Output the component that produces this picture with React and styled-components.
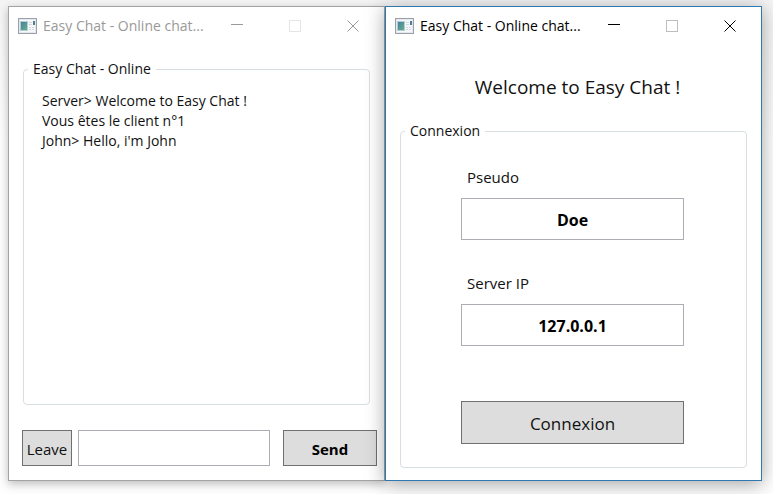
import { useState } from "react";
import styled, { createGlobalStyle } from "styled-components";

const AppIcon = () => (
    <svg width="19" height="16" viewBox="0 0 19 16" aria-hidden="true">
        <defs>
            <linearGradient id="screen" x1="0" y1="0" x2="1" y2="1">
                <stop offset="0" stopColor="#4a7fa0" />
                <stop offset="1" stopColor="#62b08c" />
            </linearGradient>
        </defs>
        <rect x="0.5" y="0.5" width="18" height="15" fill="#f6f7fa" stroke="#9aa1ab" />
        <rect x="1.5" y="1.5" width="16" height="13" fill="none" stroke="#e4e7ee" />
        <rect x="2" y="3" width="8" height="10" fill="#b4cdd2" />
        <rect x="3" y="4" width="6" height="8" fill="url(#screen)" />
        <path d="M11 4.5h3M11 6.5h3M11 9.5h2M14 9.5h2M11 11.5h2M14 11.5h2" stroke="#d3d6dc" />
        <rect x="15" y="3" width="2" height="4" fill="#4f7f8c" />
    </svg>
)

const TitleBar = ({ active }) => (
    <Bar $active={active}>
        <AppIcon />
        <Caption>Easy Chat - Online chat...</Caption>
        <CaptionButton aria-label="Minimize">
            <svg width="12" height="12"><path d="M0 4.5h12" /></svg>
        </CaptionButton>
        <CaptionButton aria-label="Maximize" disabled>
            <svg width="12" height="12"><rect x="0.5" y="0.5" width="11" height="11" /></svg>
        </CaptionButton>
        <CaptionButton aria-label="Close">
            <svg width="12" height="12"><path d="M0.5 0.5l11 11M11.5 0.5l-11 11" /></svg>
        </CaptionButton>
    </Bar>
)

const ChatWindow = () => {
    const [message, setMessage] = useState("");

    return (
        <Window>
            <TitleBar />
            <ChatBody>
                <GroupBox>
                    <Legend>Easy Chat - Online</Legend>
                    <Log>
                        <li>Server&gt; Welcome to Easy Chat !</li>
                        <li>Vous êtes le client n°1</li>
                        <li>John&gt; Hello, i'm John</li>
                    </Log>
                </GroupBox>
            </ChatBody>
            <SendRow>
                <LeaveButton type="button">Leave</LeaveButton>
                <MessageInput
                    aria-label="Message"
                    value={message}
                    onChange={(e) => setMessage(e.target.value)}
                />
                <SendButton type="button">Send</SendButton>
            </SendRow>
        </Window>
    )
}

const LoginWindow = () => {
    const [pseudo, setPseudo] = useState("Doe");
    const [server, setServer] = useState("127.0.0.1");

    return (
        <Window $active>
            <TitleBar active />
            <LoginBody>
                <Welcome>Welcome to Easy Chat !</Welcome>
                <GroupBox>
                    <Legend>Connexion</Legend>
                    <Form>
                        <Label htmlFor="pseudo">Pseudo</Label>
                        <Field id="pseudo" value={pseudo} onChange={(e) => setPseudo(e.target.value)} />
                        <Label htmlFor="server">Server IP</Label>
                        <Field id="server" value={server} onChange={(e) => setServer(e.target.value)} />
                        <ConnectButton type="button">Connexion</ConnectButton>
                    </Form>
                </GroupBox>
            </LoginBody>
        </Window>
    )
}

const App = () => {
    return (
        <Desktop>
            <GlobalStyle />
            <ChatWindow />
            <LoginWindow />
        </Desktop>
    )
}

export default App;

const GlobalStyle = createGlobalStyle`
    *{
        box-sizing:border-box;
    }

    body{
        margin:0;
        background:linear-gradient(#f4f4f4, #fefefe 30%);
        color:#111;
        font-family:"Open Sans", "Noto Sans", sans-serif;
        font-size:14px;
        line-height:20px;
    }

    button, input{
        font:inherit;
        font-size:15px;
        color:inherit;
        border-radius:0;
    }
`

const Desktop = styled.main`
    min-height:100vh;
    display:grid;
    grid-template-columns:repeat(auto-fit, minmax(320px, 1fr));
    padding:6px 11px 13px 8px;
`

const Window = styled.section`
    display:flex;
    flex-direction:column;
    min-width:0;
    background:#fff;
    border:1px solid ${({ $active }) => ($active ? "#3079b0" : "#a3a3a3")};
    box-shadow:${({ $active }) => ($active
        ? "0 3px 18px rgba(0,0,0,0.36)"
        : "0 3px 9px rgba(0,0,0,0.26)")};
`

const Bar = styled.header`
    display:flex;
    align-items:center;
    height:38px;
    padding-left:9px;
    padding-right:2px;
    color:${({ $active }) => ($active ? "#000" : "#999")};
`

const Caption = styled.span`
    flex:1;
    min-width:0;
    padding-left:6px;
    white-space:nowrap;
    overflow:hidden;
`

const CaptionButton = styled.button`
    display:flex;
    justify-content:center;
    align-items:center;
    width:58px;
    height:32px;
    padding:0;
    border:0;
    background:none;

    svg{
        fill:none;
        stroke:currentColor;
    }

    &:disabled{
        opacity:0.25;
    }
`

const ChatBody = styled.div`
    flex:1;
    display:flex;
    flex-direction:column;
    padding:14px 14px 25px;
`

const LoginBody = styled.div`
    flex:1;
    display:flex;
    flex-direction:column;
    padding:28px 14px 12px;
`

const GroupBox = styled.fieldset`
    flex:1;
    min-width:0;
    margin:0;
    padding:0;
    border:1px solid #d8dfe2;
    border-radius:4px;
`

const Legend = styled.legend`
    margin-left:4px;
    padding:0 5px;
`

const Log = styled.ul`
    margin:0;
    padding:12px 18px;
    list-style:none;
`

const SendRow = styled.div`
    display:flex;
    padding:0 7px 14px 13px;
`

const Button = styled.button`
    padding:2px 0 0;
    background:#ddd;
    border:1px solid #707070;
`

const LeaveButton = styled(Button)`
    width:50px;
    height:36px;
    margin-right:6px;
`

const SendButton = styled(Button)`
    width:94px;
    height:36px;
    margin-left:13px;
    font-weight:700;
    color:#000;
`

const TextBox = styled.input`
    min-width:0;
    padding:2px 6px 0;
    background:#fff;
    border:1px solid #abadb3;
`

const MessageInput = styled(TextBox)`
    flex:1;
    height:36px;
`

const Welcome = styled.h1`
    margin:0 0 20px;
    padding-left:8px;
    font-size:19px;
    font-weight:400;
    line-height:28px;
    text-align:center;
`

const Form = styled.div`
    display:flex;
    flex-direction:column;
    padding:26px 62px 0 60px;
`

const Label = styled.label`
    padding-left:6px;
    font-size:15px;
`

const Field = styled(TextBox)`
    height:42px;
    margin:11px 0 33px;
    font-size:16px;
    font-weight:700;
    text-align:center;
    color:#000;
`

const ConnectButton = styled(Button)`
    height:43px;
    margin-top:22px;
    font-size:17px;
`
